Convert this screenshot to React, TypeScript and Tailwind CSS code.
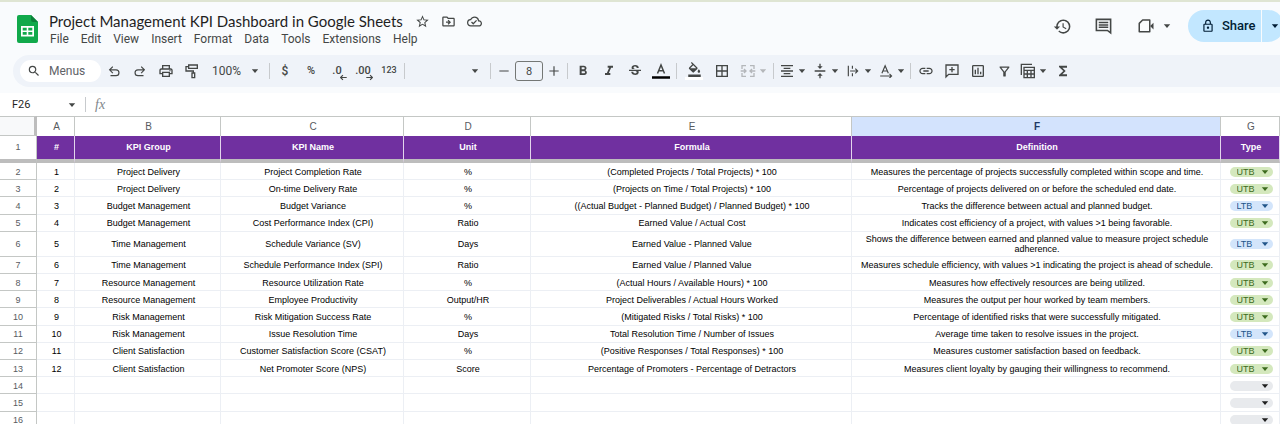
import type { ReactNode } from 'react';
import {
  MdBorderAll,
  MdFormatAlignCenter,
  MdFormatBold,
  MdFormatColorFill,
  MdFormatItalic,
  MdFunctions,
  MdHistory,
  MdLink,
  MdOutlineCloudDone,
  MdOutlineDriveFileMove,
  MdOutlineFilterAlt,
  MdOutlineInsertChart,
  MdOutlineLock,
  MdOutlinePrint,
  MdSearch,
  MdStarBorder,
  MdStrikethroughS,
  MdVerticalAlignCenter,
} from 'react-icons/md';

type Kpi = {
  group: string;
  name: string;
  unit: string;
  formula: string;
  definition: string;
  type: 'UTB' | 'LTB';
};

const kpis: Kpi[] = [
  { group: 'Project Delivery', name: 'Project Completion Rate', unit: '%', formula: '(Completed Projects / Total Projects) * 100', definition: 'Measures the percentage of projects successfully completed within scope and time.', type: 'UTB' },
  { group: 'Project Delivery', name: 'On-time Delivery Rate', unit: '%', formula: '(Projects on Time / Total Projects) * 100', definition: 'Percentage of projects delivered on or before the scheduled end date.', type: 'UTB' },
  { group: 'Budget Management', name: 'Budget Variance', unit: '%', formula: '((Actual Budget - Planned Budget) / Planned Budget) * 100', definition: 'Tracks the difference between actual and planned budget.', type: 'LTB' },
  { group: 'Budget Management', name: 'Cost Performance Index (CPI)', unit: 'Ratio', formula: 'Earned Value / Actual Cost', definition: 'Indicates cost efficiency of a project, with values >1 being favorable.', type: 'UTB' },
  { group: 'Time Management', name: 'Schedule Variance (SV)', unit: 'Days', formula: 'Earned Value - Planned Value', definition: 'Shows the difference between earned and planned value to measure project schedule adherence.', type: 'LTB' },
  { group: 'Time Management', name: 'Schedule Performance Index (SPI)', unit: 'Ratio', formula: 'Earned Value / Planned Value', definition: 'Measures schedule efficiency, with values >1 indicating the project is ahead of schedule.', type: 'UTB' },
  { group: 'Resource Management', name: 'Resource Utilization Rate', unit: '%', formula: '(Actual Hours / Available Hours) * 100', definition: 'Measures how effectively resources are being utilized.', type: 'UTB' },
  { group: 'Resource Management', name: 'Employee Productivity', unit: 'Output/HR', formula: 'Project Deliverables / Actual Hours Worked', definition: 'Measures the output per hour worked by team members.', type: 'UTB' },
  { group: 'Risk Management', name: 'Risk Mitigation Success Rate', unit: '%', formula: '(Mitigated Risks / Total Risks) * 100', definition: 'Percentage of identified risks that were successfully mitigated.', type: 'UTB' },
  { group: 'Risk Management', name: 'Issue Resolution Time', unit: 'Days', formula: 'Total Resolution Time / Number of Issues', definition: 'Average time taken to resolve issues in the project.', type: 'LTB' },
  { group: 'Client Satisfaction', name: 'Customer Satisfaction Score (CSAT)', unit: '%', formula: '(Positive Responses / Total Responses) * 100', definition: 'Measures customer satisfaction based on feedback.', type: 'UTB' },
  { group: 'Client Satisfaction', name: 'Net Promoter Score (NPS)', unit: 'Score', formula: 'Percentage of Promoters - Percentage of Detractors', definition: 'Measures client loyalty by gauging their willingness to recommend.', type: 'UTB' },
];

const menus = ['File', 'Edit', 'View', 'Insert', 'Format', 'Data', 'Tools', 'Extensions', 'Help'];
const columns = ['A', 'B', 'C', 'D', 'E', 'F', 'G'];
const headings = ['#', 'KPI Group', 'KPI Name', 'Unit', 'Formula', 'Definition', 'Type'];
const emptyRows = [14, 15, 16];

function Caret({ className = '' }: { className?: string }) {
  return (
    <svg viewBox="0 0 10 10" className={`size-[10px] shrink-0 ${className}`} fill="currentColor" aria-hidden="true">
      <path d="M1.8 3.3h6.4L5 6.9z" />
    </svg>
  );
}

function Glyph({ children, className = 'size-4' }: { children: ReactNode; className?: string }) {
  return (
    <svg viewBox="0 0 24 24" className={className} fill="none" stroke="currentColor" strokeWidth="2" aria-hidden="true">
      {children}
    </svg>
  );
}

function Tool({ label, children }: { label: string; children: ReactNode }) {
  return (
    <button type="button" aria-label={label} className="flex h-6 w-[26px] shrink-0 items-center justify-center">
      {children}
    </button>
  );
}

function MenuTool({ label, disabled, children }: { label: string; disabled?: boolean; children: ReactNode }) {
  return (
    <button
      type="button"
      aria-label={label}
      disabled={disabled}
      className="flex h-6 w-[33px] shrink-0 items-center justify-center gap-px disabled:text-[#b4b7ba]"
    >
      <span className="flex w-[18px] justify-center">{children}</span>
      <Caret />
    </button>
  );
}

function Separator() {
  return <div className="mx-[2px] h-4 w-px shrink-0 bg-[#c7cacd]" />;
}

function SheetsLogo() {
  return (
    <svg viewBox="0 0 21 28" className="h-7 w-[21px] shrink-0" aria-hidden="true">
      <path d="M2 0h12l7 7v19a2 2 0 0 1-2 2H2a2 2 0 0 1-2-2V2a2 2 0 0 1 2-2z" fill="#11a94b" />
      <path d="M14 0l7 7h-5a2 2 0 0 1-2-2z" fill="#0c8039" />
      <path d="M4 11h13v10.500H4zM5.700 12.700v2.700h4v-2.700zM11.300 12.700v2.700h4v-2.700zM5.700 17v2.800h4V17zM11.300 17v2.800h4V17z" fill="#fff" fillRule="evenodd" />
    </svg>
  );
}

function Header() {
  return (
    <header className="flex h-[53px] justify-between overflow-hidden">
      <div className="flex items-start gap-[11px] pl-[17px] pt-2">
        <div className="pt-[5px]">
          <SheetsLogo />
        </div>
        <div>
          <div className="flex h-[22px] items-center">
            <h1 className="whitespace-nowrap font-[Lato,sans-serif] text-[15px] leading-[22px] text-[#1f1f1f]">
              Project Management KPI Dashboard in Google Sheets
            </h1>
            <div className="ml-3 flex items-center gap-[11px]">
              <button type="button" aria-label="Star"><MdStarBorder size={15} /></button>
              <button type="button" aria-label="Move"><MdOutlineDriveFileMove size={15} /></button>
              <button type="button" aria-label="Document status"><MdOutlineCloudDone size={15} /></button>
            </div>
          </div>
          <nav className="flex gap-3 pl-px text-[12px] leading-[15px]">
            {menus.map((menu) => (
              <button key={menu} type="button">{menu}</button>
            ))}
          </nav>
        </div>
      </div>

      <div className="-mr-1 mt-2 flex h-8 items-center self-start">
        <button type="button" aria-label="Version history" className="mr-[22px]"><MdHistory size={19} /></button>
        <button type="button" aria-label="Comments" className="mr-6">
          <Glyph className="size-[19px]">
            <path d="M3 3h18v17l-4-3H3z" />
            <path d="M6 7h12M6 10h12M6 13h12" />
          </Glyph>
        </button>
        <button type="button" aria-label="Join a call" className="mr-4 flex items-center gap-[7px]">
          <Glyph className="size-[18px]">
            <path d="M7.500 4H17v15.500H3V8.500z" strokeLinejoin="round" />
            <path d="M17.500 12l4.500-4.500v9z" fill="currentColor" stroke="none" />
          </Glyph>
          <Caret />
        </button>
        <button type="button" className="flex h-8 w-[73px] items-center gap-[7px] rounded-l-full bg-[#c2e7ff] pl-[13px] text-[13px] font-medium text-[#001d35]">
          <MdOutlineLock size={14} />
          Share
        </button>
        <button type="button" aria-label="Quick sharing actions" className="ml-px flex h-8 w-[22px] items-center rounded-r-full bg-[#c2e7ff] pl-2 text-[#001d35]">
          <Caret />
        </button>
      </div>
    </header>
  );
}

function Toolbar() {
  return (
    <div className="ml-[13px] flex h-8 items-center overflow-hidden rounded-l-full bg-[#eff3f9] pl-[7px]">
      <button type="button" className="flex h-[22px] w-[81px] shrink-0 items-center gap-2 rounded-full bg-white pl-[7px] text-[12px] text-[#5f6368]">
        <MdSearch size={14} className="text-[#444746]" />
        Menus
      </button>
      <Tool label="Undo">
        <Glyph className="size-[14px]"><path d="M6 20h9.500a5 5 0 0 0 0-10H5M10 4.500L4.500 10l5.500 5.500" /></Glyph>
      </Tool>
      <Tool label="Redo">
        <Glyph className="size-[14px]"><path d="M18 20H8.500a5 5 0 0 1 0-10H19M14 4.500l5.500 5.500-5.500 5.500" /></Glyph>
      </Tool>
      <Tool label="Print"><MdOutlinePrint size={16} /></Tool>
      <Tool label="Paint format">
        <Glyph><path d="M7 3h13v5H7zM7 5.500H3V12h11v3M12 15h4v7h-4z" /></Glyph>
      </Tool>
      <label className="relative flex w-[62px] shrink-0 items-center">
        <select aria-label="Zoom" className="w-full appearance-none pl-[7px] text-[12px] leading-4 outline-none">
          <option>100%</option>
        </select>
        <Caret className="pointer-events-none absolute right-[7px]" />
      </label>
      <Separator />
      <Tool label="Format as currency"><span className="text-[12px] font-medium">$</span></Tool>
      <Tool label="Format as percent"><span className="text-[11px] font-medium">%</span></Tool>
      <button type="button" aria-label="Decrease decimal places" className="relative h-5 w-[26px] shrink-0 text-[11px] font-medium leading-4">
        .0
        <Glyph className="absolute bottom-0 right-[3px] size-[7px]"><path d="M23 12H3M10 4l-8 8 8 8" strokeWidth="4" /></Glyph>
      </button>
      <button type="button" aria-label="Increase decimal places" className="relative h-5 w-[26px] shrink-0 text-[11px] font-medium leading-4">
        .00
        <Glyph className="absolute bottom-0 right-[3px] size-[7px]"><path d="M1 12h20M14 4l8 8-8 8" strokeWidth="4" /></Glyph>
      </button>
      <Tool label="More formats"><span className="text-[9px] font-medium">123</span></Tool>
      <Separator />
      <label className="relative flex w-[81px] shrink-0 items-center">
        <select aria-label="Font" className="h-5 w-full appearance-none outline-none" />
        <Caret className="pointer-events-none absolute right-[8px]" />
      </label>
      <Separator />
      <button type="button" aria-label="Decrease font size" className="flex h-6 w-[22px] shrink-0 items-center justify-center">
        <Glyph className="size-[14px]"><path d="M4 12h16" /></Glyph>
      </button>
      <input
        aria-label="Font size"
        defaultValue="8"
        className="h-5 w-7 shrink-0 rounded-[3px] border border-[#747775] text-center text-[11px] outline-none"
      />
      <button type="button" aria-label="Increase font size" className="flex h-6 w-[22px] shrink-0 items-center justify-center">
        <Glyph className="size-[14px]"><path d="M4 12h16M12 4v16" /></Glyph>
      </button>
      <Separator />
      <Tool label="Bold"><MdFormatBold size={16} /></Tool>
      <Tool label="Italic"><MdFormatItalic size={16} /></Tool>
      <Tool label="Strikethrough"><MdStrikethroughS size={16} /></Tool>
      <Tool label="Text color">
        <svg viewBox="0 0 18 18" className="size-[18px]" fill="none" stroke="currentColor" strokeWidth="1.500" aria-hidden="true">
          <path d="M5.500 11.500L9 3l3.500 8.500M6.700 8.800h4.600" />
          <path d="M0 15.500h18" stroke="#000" strokeWidth="2.500" />
        </svg>
      </Tool>
      <Separator />
      <div className="flex shrink-0 gap-[2px] pl-[2px] pr-px">
        <button type="button" aria-label="Fill color" className="flex h-6 w-[26px] flex-col items-center justify-center">
          <MdFormatColorFill size={15} />
          <span className="h-[3px] w-[18px] bg-white" />
        </button>
        <Tool label="Borders"><MdBorderAll size={16} /></Tool>
        <MenuTool label="Merge cells" disabled>
          <Glyph><path d="M9 4H3v5M15 4h6v5M9 20H3v-5M15 20h6v-5M1 12h8M6 9l3 3-3 3M23 12h-8M18 9l-3 3 3 3" /></Glyph>
        </MenuTool>
      </div>
      <Separator />
      <MenuTool label="Horizontal align"><MdFormatAlignCenter size={16} /></MenuTool>
      <MenuTool label="Vertical align"><MdVerticalAlignCenter size={16} /></MenuTool>
      <MenuTool label="Text wrapping">
        <Glyph className="size-[14px]"><path d="M4 3v18M11 3v5M11 16v5M7 12h13M16 8l4 4-4 4" /></Glyph>
      </MenuTool>
      <MenuTool label="Text rotation">
        <Glyph className="size-[14px]"><path d="M5 16l5.500-13L16 16M7 12h7M2 20.500h19M18 17l3.500 3.500L18 24" /></Glyph>
      </MenuTool>
      <Separator />
      <Tool label="Insert link"><MdLink size={16} /></Tool>
      <Tool label="Insert comment">
        <Glyph><path d="M3 3h18v14H7l-4 4zM12 6v8M8 10h8" /></Glyph>
      </Tool>
      <Tool label="Insert chart"><MdOutlineInsertChart size={16} /></Tool>
      <Tool label="Create a filter"><MdOutlineFilterAlt size={15} /></Tool>
      <MenuTool label="Table views">
        <Glyph><path d="M2 18V2h16" /><path d="M6 6.500h15.500V22H6zM6 11h15.500M6 16.500h15.500M11 11v11M16.500 11v11" /></Glyph>
      </MenuTool>
      <Tool label="Functions"><MdFunctions size={16} /></Tool>
    </div>
  );
}

function FormulaBar() {
  return (
    <div className="flex h-[23px] items-center bg-white">
      <label className="relative flex w-[85px] items-center">
        <input aria-label="Name box" defaultValue="F26" className="w-full pl-3 text-[11px] leading-4 text-[#1f1f1f] outline-none" />
        <Caret className="absolute right-2" />
      </label>
      <div className="h-[15px] w-px bg-[#c7cacd]" />
      <span className="ml-[9px] font-['Liberation_Serif',serif] text-[14px] italic leading-4 text-[#80868b]">fx</span>
      <input aria-label="Formula" className="ml-2 min-w-0 flex-1 outline-none" />
    </div>
  );
}

function TypeChip({ row, value }: { row: number; value?: 'UTB' | 'LTB' }) {
  const color = value === 'UTB' ? 'bg-[#d4e8bd] text-[#3d6b1e]' : value === 'LTB' ? 'bg-[#d3e5fb] text-[#21558a]' : 'bg-[#e8eaed] text-[#1f1f1f]';

  return (
    <label className={`relative mx-auto flex h-[10px] w-[43px] items-center rounded-full ${color}`}>
      <select aria-label={`Type, row ${row}`} className="h-[10px] w-full appearance-none pl-[7px] text-[9px] leading-[10px] outline-none">
        <option>{value ?? ''}</option>
      </select>
      <Caret className="pointer-events-none absolute right-[3px]" />
    </label>
  );
}

const rowHead = 'border-b border-r border-[#c4c7c5] px-0 pb-0 pt-px font-normal text-[#575b5f]';
const cell = 'border-b border-r border-[#eceff4] pl-[3px] pr-px pt-px pb-0';

function Sheet() {
  return (
    <table className="h-[313px] w-full table-fixed border-separate border-spacing-0 text-center font-['Liberation_Sans',Arial,sans-serif] text-[9px] leading-[10px] text-black">
      <colgroup>
        <col className="w-[37px]" />
        <col className="w-[38px]" />
        <col className="w-[146px]" />
        <col className="w-[183px]" />
        <col className="w-[127px]" />
        <col className="w-[321px]" />
        <col />
        <col className="w-[59px]" />
      </colgroup>
      <thead>
        <tr className="h-5">
          <td className="border-b border-r-[3px] border-t border-b-[#c4c7c5] border-r-[#bdbdbd] border-t-[#c4c7c5] bg-[#f8f9fa] p-0" />
          {columns.map((column) => (
            <th
              key={column}
              scope="col"
              className={`border-r border-t border-[#c4c7c5] py-0 pl-[2px] pr-0 text-[10px] ${column === 'F' ? 'bg-[#d3e3fd] font-bold text-[#1f3864]' : 'font-normal text-[#575b5f]'}`}
            >
              {column}
            </th>
          ))}
        </tr>
        <tr className="h-[27px]">
          <th scope="row" className="border-b-4 border-r border-b-[#bdbdbd] border-r-[#c4c7c5] px-0 pb-[2px] pt-0 font-normal text-[#575b5f]">1</th>
          {headings.map((heading) => (
            <th key={heading} scope="col" className="border-b-4 border-r border-b-[#bdbdbd] border-r-[#e3d5ec] bg-[#7030a0] pb-[2px] pl-[2px] pr-0 pt-0 font-bold text-white">
              {heading}
            </th>
          ))}
        </tr>
      </thead>
      <tbody>
        {kpis.map((kpi, i) => (
          <tr key={kpi.name} className={kpi.name === 'Schedule Variance (SV)' ? 'h-[25px]' : ''}>
            <th scope="row" className={rowHead}>{i + 2}</th>
            <td className={cell}>{i + 1}</td>
            <td className={cell}>{kpi.group}</td>
            <td className={cell}>{kpi.name}</td>
            <td className={cell}>{kpi.unit}</td>
            <td className={cell}>{kpi.formula}</td>
            <td className={cell}>{kpi.definition}</td>
            <td className={cell}><TypeChip row={i + 2} value={kpi.type} /></td>
          </tr>
        ))}
        {emptyRows.map((row) => (
          <tr key={row}>
            <th scope="row" className={rowHead}>{row}</th>
            {columns.map((column) => (
              <td key={column} className={cell}>{column === 'G' && <TypeChip row={row} />}</td>
            ))}
          </tr>
        ))}
      </tbody>
    </table>
  );
}

export default function App() {
  return (
    <div className="flex h-screen flex-col overflow-hidden bg-white font-[Roboto,sans-serif] text-[#444746]">
      <div className="shrink-0 border-t-2 border-[#dfe5d3] bg-[#f9fbfd] pb-[6px]">
        <Header />
        <Toolbar />
      </div>
      <FormulaBar />
      <main className="min-h-0 flex-1 overflow-hidden">
        <Sheet />
      </main>
    </div>
  );
}
